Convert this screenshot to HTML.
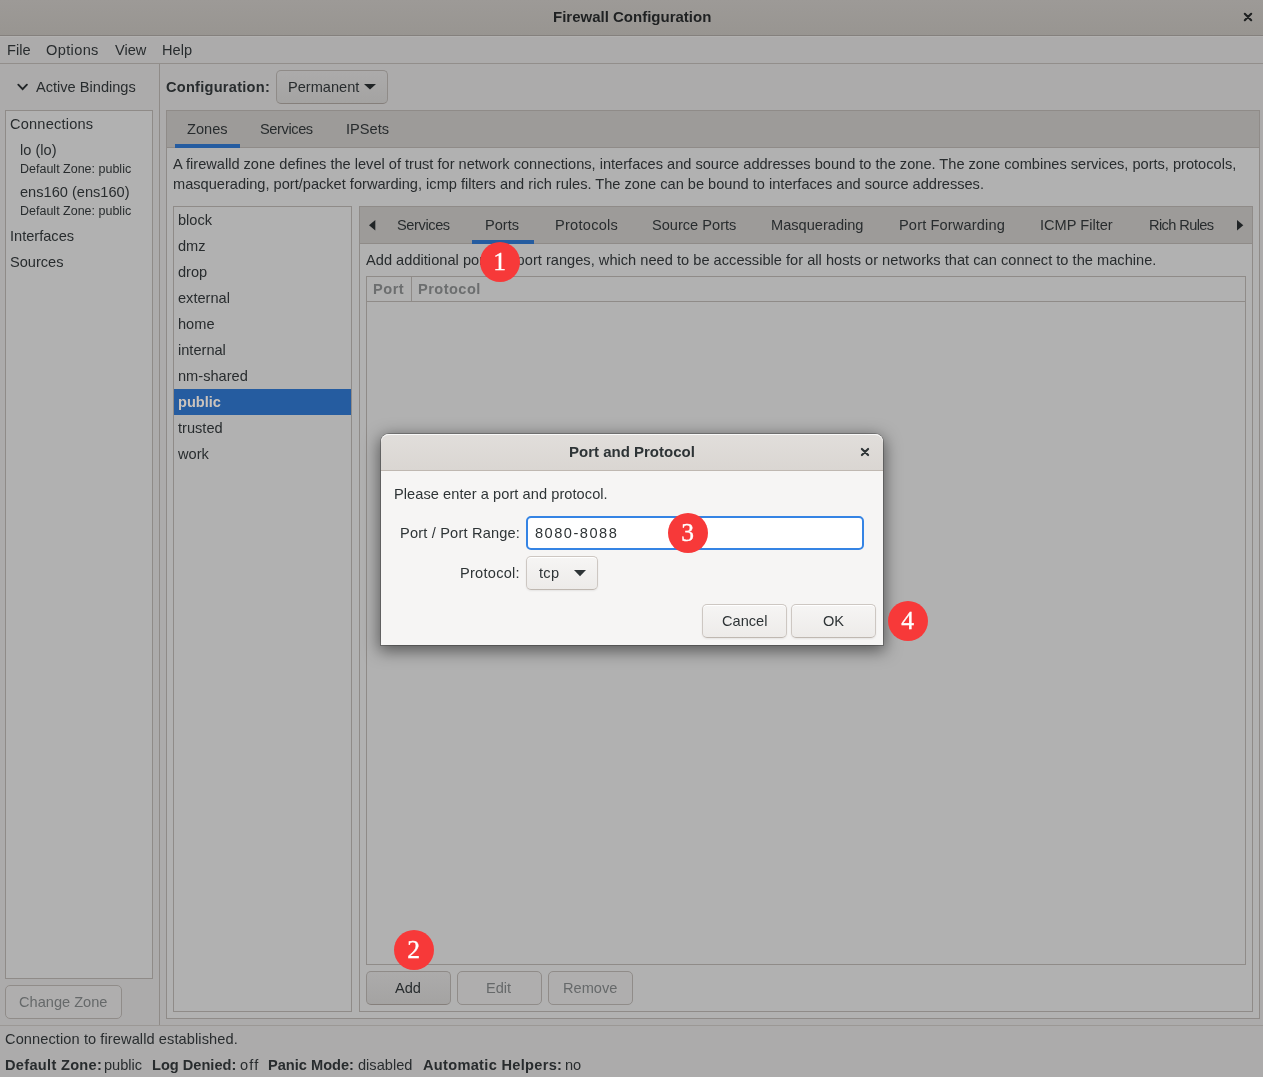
<!DOCTYPE html>
<html><head><meta charset="utf-8">
<style>
html,body{margin:0;padding:0;width:1263px;height:1077px;overflow:hidden;background:#acabab;font-family:"Liberation Sans",sans-serif;color:#282c2e;}
.a{position:absolute;}
.t{position:absolute;white-space:nowrap;font-size:14.6px;line-height:17px;}
.s{position:absolute;white-space:nowrap;font-size:12.5px;line-height:17px;}
.b{font-weight:bold;}
.ln{position:absolute;background:#8f8b88;}
.frame{position:absolute;border:1px solid #8f8b88;box-sizing:border-box;}
.btn{position:absolute;box-sizing:border-box;border:1px solid #8f8b88;border-bottom-color:#857f7b;border-radius:5px;background:linear-gradient(#acabab,#a4a3a2);}
.dis{background:#afaeae;border-color:#908c89;}
.dtx{color:#66696a;}
.dbtn{position:absolute;box-sizing:border-box;border:1px solid #cdc7c2;border-bottom-color:#bfb8b1;border-radius:5px;background:linear-gradient(#f6f5f4,#edebe9);box-shadow:inset 0 1px #fff,0 1px 2px rgba(0,0,0,.07);}
.badge{position:absolute;width:40px;height:40px;border-radius:50%;background:#f73939;color:#fff;font-family:"Liberation Serif",serif;font-size:25.5px;line-height:40px;-webkit-text-stroke:0.35px #fff;text-align:center;}
#root{position:absolute;left:0;top:0;width:1263px;height:1077px;will-change:transform;}
</style></head><body><div id="root">
<!-- titlebar -->
<div class="a" style="left:0;top:0;width:1263px;height:35px;background:linear-gradient(#9d9a97,#989591);"></div>
<div class="ln" style="left:0;top:35px;width:1263px;height:1px;background:#84807d;"></div>
<div class="ln" style="left:0;top:36px;width:1263px;height:1px;background:#b2b1b0;"></div>
<div class="t b" style="left:553px;top:8px;font-size:15px;color:#1f2122;">Firewall Configuration</div>
<svg class="a" style="left:1241px;top:10px" width="14" height="14" viewBox="0 0 14 14"><path d="M3.8 3.8L10.2 10.2M10.2 3.8L3.8 10.2" stroke="#1f2122" stroke-width="2.1" stroke-linecap="round"/></svg>

<!-- menubar -->
<div class="ln" style="left:0;top:63px;width:1263px;height:1px;background:#928e8b;"></div>
<div class="t" style="left:7px;top:42px;">File</div>
<div class="t" style="left:46px;top:42px;letter-spacing:0.35px;">Options</div>
<div class="t" style="left:115px;top:42px;">View</div>
<div class="t" style="left:162px;top:42px;">Help</div>

<!-- left pane -->
<div class="ln" style="left:159px;top:64px;width:1px;height:961px;background:#8f8b88;"></div>
<svg class="a" style="left:16px;top:81px" width="14" height="12" viewBox="0 0 14 12"><path d="M2.3 3.7L6.6 8.1L10.9 3.7" fill="none" stroke="#202426" stroke-width="1.9" stroke-linecap="round"/></svg>
<div class="t" style="left:36px;top:79px;">Active Bindings</div>
<div class="frame" style="left:5px;top:110px;width:148px;height:869px;background:#b1b1b1;"></div>
<div class="t" style="left:10px;top:116px;letter-spacing:0.2px;">Connections</div>
<div class="t" style="left:20px;top:142px;">lo (lo)</div>
<div class="s" style="left:20px;top:161px;">Default Zone: public</div>
<div class="t" style="left:20px;top:184px;">ens160 (ens160)</div>
<div class="s" style="left:20px;top:203px;">Default Zone: public</div>
<div class="t" style="left:10px;top:228px;">Interfaces</div>
<div class="t" style="left:10px;top:254px;">Sources</div>
<div class="btn dis" style="left:5px;top:985px;width:117px;height:34px;"></div>
<div class="t dtx" style="left:19px;top:994px;">Change Zone</div>

<!-- configuration -->
<div class="t b" style="left:166px;top:79px;letter-spacing:0.25px;">Configuration:</div>
<div class="btn" style="left:276px;top:70px;width:112px;height:34px;"></div>
<div class="t" style="left:288px;top:79px;">Permanent</div>
<svg class="a" style="left:362px;top:82px" width="16" height="10" viewBox="0 0 16 10"><path d="M2 2H14L8 7.6Z" fill="#202426"/></svg>

<!-- outer notebook -->
<div class="frame" style="left:166px;top:110px;width:1094px;height:909px;background:#b1b1b1;"></div>
<div class="a" style="left:167px;top:111px;width:1092px;height:36px;background:#9d9b99;"></div>
<div class="ln" style="left:167px;top:147px;width:1092px;height:1px;"></div>
<div class="a" style="left:175px;top:144px;width:65px;height:4px;background:#255ca0;"></div>
<div class="t" style="left:187px;top:121px;">Zones</div>
<div class="t" style="left:260px;top:121px;letter-spacing:-0.4px;">Services</div>
<div class="t" style="left:346px;top:121px;">IPSets</div>
<div class="t" style="left:173px;top:156px;">A firewalld zone defines the level of trust for network connections, interfaces and source addresses bound to the zone. The zone combines services, ports, protocols,</div>
<div class="t" style="left:173px;top:176px;">masquerading, port/packet forwarding, icmp filters and rich rules. The zone can be bound to interfaces and source addresses.</div>

<!-- zone list -->
<div class="frame" style="left:173px;top:206px;width:179px;height:806px;background:#b1b1b1;"></div>
<div class="a" style="left:174px;top:389px;width:177px;height:26px;background:#255ca0;"></div>
<div class="t" style="left:178px;top:212px;">block</div>
<div class="t" style="left:178px;top:238px;">dmz</div>
<div class="t" style="left:178px;top:264px;">drop</div>
<div class="t" style="left:178px;top:290px;">external</div>
<div class="t" style="left:178px;top:316px;">home</div>
<div class="t" style="left:178px;top:342px;">internal</div>
<div class="t" style="left:178px;top:368px;">nm-shared</div>
<div class="t b" style="left:178px;top:394px;color:#cac3bc;">public</div>
<div class="t" style="left:178px;top:420px;">trusted</div>
<div class="t" style="left:178px;top:446px;">work</div>

<!-- inner notebook -->
<div class="frame" style="left:359px;top:206px;width:894px;height:806px;background:#b1b1b1;"></div>
<div class="a" style="left:360px;top:207px;width:892px;height:36px;background:#9d9b99;"></div>
<div class="ln" style="left:360px;top:243px;width:892px;height:1px;"></div>
<div class="a" style="left:472px;top:240px;width:62px;height:4px;background:#255ca0;"></div>
<svg class="a" style="left:366px;top:218px" width="12" height="14" viewBox="0 0 12 14"><path d="M9.3 2V12.6L3 7.3Z" fill="#202426"/></svg>
<svg class="a" style="left:1234px;top:218px" width="12" height="14" viewBox="0 0 12 14"><path d="M3 2V12.6L9.3 7.3Z" fill="#202426"/></svg>
<div class="t" style="left:397px;top:217px;letter-spacing:-0.4px;">Services</div>
<div class="t" style="left:485px;top:217px;">Ports</div>
<div class="t" style="left:555px;top:217px;letter-spacing:0.25px;">Protocols</div>
<div class="t" style="left:652px;top:217px;">Source Ports</div>
<div class="t" style="left:771px;top:217px;">Masquerading</div>
<div class="t" style="left:899px;top:217px;letter-spacing:0.14px;">Port Forwarding</div>
<div class="t" style="left:1040px;top:217px;">ICMP Filter</div>
<div class="t" style="left:1149px;top:217px;letter-spacing:-0.6px;">Rich Rules</div>
<div class="t" style="left:366px;top:252px;letter-spacing:0.022px;">Add additional ports or port ranges, which need to be accessible for all hosts or networks that can connect to the machine.</div>
<div class="frame" style="left:366px;top:276px;width:880px;height:689px;background:#b1b1b1;"></div>
<div class="ln" style="left:367px;top:301px;width:878px;height:1px;"></div>
<div class="ln" style="left:411px;top:277px;width:1px;height:24px;"></div>
<div class="t b" style="left:373px;top:281px;color:#6c6e6f;letter-spacing:0.5px;">Port</div>
<div class="t b" style="left:418px;top:281px;color:#6c6e6f;letter-spacing:0.45px;">Protocol</div>

<div class="btn" style="left:366px;top:971px;width:85px;height:34px;"></div>
<div class="t" style="left:395px;top:980px;">Add</div>
<div class="btn dis" style="left:457px;top:971px;width:85px;height:34px;"></div>
<div class="t dtx" style="left:486px;top:980px;">Edit</div>
<div class="btn dis" style="left:548px;top:971px;width:85px;height:34px;"></div>
<div class="t dtx" style="left:563px;top:980px;">Remove</div>

<!-- status -->
<div class="ln" style="left:0;top:1025px;width:1263px;height:1px;background:#9b9895;"></div>
<div class="t" style="left:5px;top:1031px;letter-spacing:0.09px;">Connection to firewalld established.</div>
<div class="t b" style="left:5px;top:1057px;letter-spacing:0.3px;">Default Zone:</div>
<div class="t" style="left:104px;top:1057px;">public</div>
<div class="t b" style="left:152px;top:1057px;">Log Denied:</div>
<div class="t" style="left:240px;top:1057px;letter-spacing:1.2px;">off</div>
<div class="t b" style="left:268px;top:1057px;">Panic Mode:</div>
<div class="t" style="left:358px;top:1057px;">disabled</div>
<div class="t b" style="left:423px;top:1057px;letter-spacing:0.3px;">Automatic Helpers:</div>
<div class="t" style="left:565px;top:1057px;">no</div>

<!-- dialog -->
<div class="a" style="left:381px;top:434px;width:502px;height:211px;background:#f6f5f4;border-radius:8px 8px 0 0;box-shadow:0 4px 16px 2px rgba(0,0,0,.5),0 0 0 1px rgba(0,0,0,.23);"></div>
<div class="a" style="left:381px;top:434px;width:502px;height:36px;background:linear-gradient(#e1dedb,#dad6d2);border-radius:8px 8px 0 0;box-shadow:inset 0 1px rgba(255,255,255,.8);"></div>
<div class="ln" style="left:381px;top:470px;width:502px;height:1px;background:#bfb8b1;"></div>
<div class="t b" style="left:569px;top:443px;font-size:15px;color:#2e3436;">Port and Protocol</div>
<svg class="a" style="left:858px;top:445px" width="14" height="14" viewBox="0 0 14 14"><path d="M3.9 3.9L10.1 10.1M10.1 3.9L3.9 10.1" stroke="#2e3436" stroke-width="2.1" stroke-linecap="round"/></svg>
<div class="t" style="left:394px;top:486px;color:#2e3436;letter-spacing:0.06px;">Please enter a port and protocol.</div>
<div class="t" style="left:400px;top:525px;color:#2e3436;letter-spacing:0.18px;">Port / Port Range:</div>
<div class="a" style="left:526px;top:516px;width:338px;height:34px;background:#fff;border:2px solid #3584e4;border-radius:5px;box-sizing:border-box;"></div>
<div class="t" style="left:535px;top:525px;color:#2e3436;letter-spacing:1.5px;">8080-8088</div>
<div class="t" style="left:460px;top:565px;color:#2e3436;letter-spacing:0.25px;">Protocol:</div>
<div class="dbtn" style="left:526px;top:556px;width:72px;height:34px;"></div>
<div class="t" style="left:539px;top:565px;color:#2e3436;letter-spacing:0.3px;">tcp</div>
<svg class="a" style="left:572px;top:568px" width="16" height="10" viewBox="0 0 16 10"><path d="M2 2H14L8 8.2Z" fill="#2e3436"/></svg>
<div class="dbtn" style="left:702px;top:604px;width:85px;height:34px;"></div>
<div class="t" style="left:722px;top:613px;color:#2e3436;">Cancel</div>
<div class="dbtn" style="left:791px;top:604px;width:85px;height:34px;"></div>
<div class="t" style="left:823px;top:613px;color:#2e3436;">OK</div>

<!-- badges -->
<div class="badge" style="left:479.5px;top:241.8px;">1</div>
<div class="badge" style="left:393.5px;top:930px;">2</div>
<div class="badge" style="left:667.5px;top:512.6px;">3</div>
<div class="badge" style="left:887.5px;top:600.6px;">4</div>
</div></body></html>
